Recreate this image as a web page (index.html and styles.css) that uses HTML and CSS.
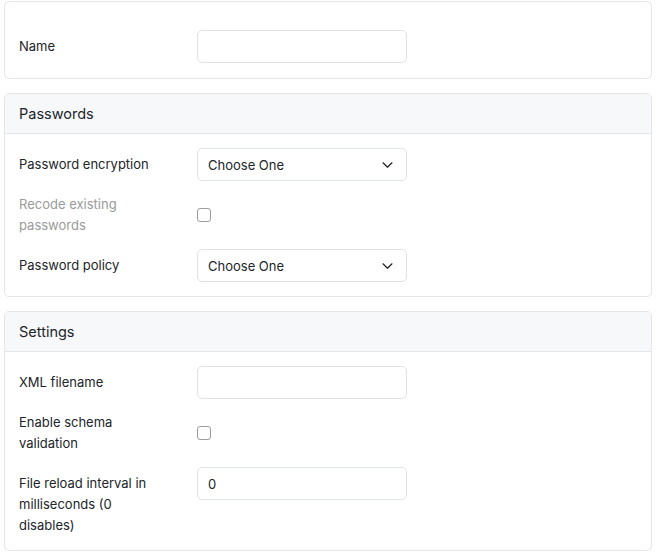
FILE: index.html
```html
<!DOCTYPE html>
<html>
<head>
<meta charset="utf-8">
<link rel="stylesheet" href="styles.css">
</head>
<body>
<div class="page">
  <section class="card">
    <div class="card-body first">
      <div class="row">
        <label class="lbl">Name</label>
        <div class="ctl"><input class="field" type="text"></div>
      </div>
    </div>
  </section>

  <section class="card">
    <div class="card-header">Passwords</div>
    <div class="card-body">
      <div class="row">
        <label class="lbl">Password encryption</label>
        <div class="ctl">
          <div class="select"><span>Choose One</span>
            <svg class="chev" width="11" height="6" viewBox="0 0 11 6"><path d="M1 0.8l4.5 4.4 4.5-4.4" fill="none" stroke="#222" stroke-width="1.2" stroke-linecap="round" stroke-linejoin="round"/></svg>
          </div>
        </div>
      </div>
      <div class="row check-row">
        <label class="lbl muted">Recode existing passwords</label>
        <div class="ctl center"><span class="checkbox"></span></div>
      </div>
      <div class="row">
        <label class="lbl">Password policy</label>
        <div class="ctl">
          <div class="select"><span>Choose One</span>
            <svg class="chev" width="11" height="6" viewBox="0 0 11 6"><path d="M1 0.8l4.5 4.4 4.5-4.4" fill="none" stroke="#222" stroke-width="1.2" stroke-linecap="round" stroke-linejoin="round"/></svg>
          </div>
        </div>
      </div>
    </div>
  </section>

  <section class="card">
    <div class="card-header">Settings</div>
    <div class="card-body">
      <div class="row">
        <label class="lbl">XML filename</label>
        <div class="ctl"><input class="field" type="text"></div>
      </div>
      <div class="row check-row">
        <label class="lbl">Enable schema validation</label>
        <div class="ctl center"><span class="checkbox"></span></div>
      </div>
      <div class="row">
        <label class="lbl">File reload interval in milliseconds (0 disables)</label>
        <div class="ctl"><input class="field" type="text" value="0"></div>
      </div>
    </div>
  </section>
</div>
</body>
</html>
```

FILE: styles.css
```css
* { box-sizing: border-box; }
html, body { margin: 0; padding: 0; background: #fff; }
body {
  font-family: Inter, "Noto Sans", sans-serif;
  font-size: 13px;
  color: #212529;
  padding: 1px 6px 0 4px;
}
.page {
  display: flex;
  flex-direction: column;
  gap: 14px;
  width: 648px;
}
.card {
  border: 1px solid #e3e5e8;
  border-radius: 5px;
  background: #fff;
  overflow: hidden;
}
.card-header {
  background: #f7f8fa;
  border-bottom: 1px solid #e3e5e8;
  padding: 8px 14px 8px;
  font-size: 14.5px;
  line-height: 23px;
}
.card-body {
  padding: 14px 14px 14px;
  display: flex;
  flex-direction: column;
  gap: 7px;
}
.card-body.first { padding-top: 28px; padding-bottom: 15px; }
.row {
  display: grid;
  grid-template-columns: 178px 210px;
  align-items: start;
}
.lbl {
  padding: 6px 36px 0 0;
  line-height: 21px;
}
.check-row .lbl { padding-bottom: 6px; }
.muted { color: #9a9a9a; }
.ctl.center { align-self: center; display: flex; align-items: center; }
.field {
  display: block;
  width: 210px;
  height: 33px;
  border: 1px solid #dfe2e6;
  border-radius: 5px;
  padding: 0 10px;
  font: inherit;
  color: #212529;
  outline: none;
}
.select {
  width: 210px;
  height: 33px;
  border: 1px solid #dfe2e6;
  border-radius: 5px;
  padding: 0 13px 0 10px;
  display: flex;
  align-items: center;
  justify-content: space-between;
}
.chev { display: block; }
.checkbox {
  display: block;
  width: 14px;
  height: 14px;
  border: 1px solid #9d9d9d;
  border-radius: 3px;
  background: #fff;
}
```
